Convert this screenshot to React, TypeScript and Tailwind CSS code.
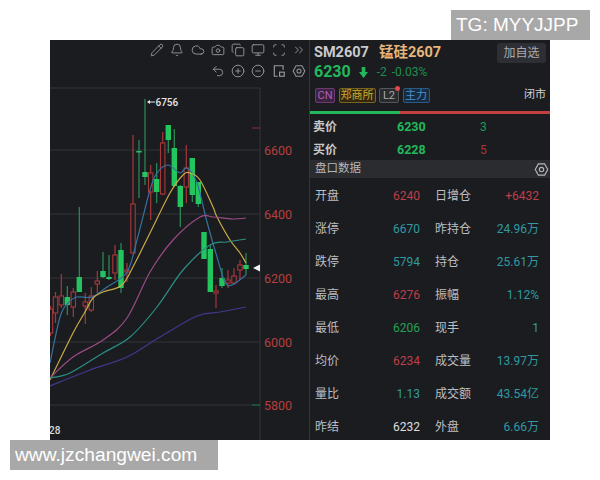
import React from "react";
import { Pencil, Bell, Cloud, Camera, Copy, Monitor, Scan, ChevronsRight, Undo2, CirclePlus, CircleMinus } from "lucide-react";

const FONT = "font-['Roboto','Noto_Sans_CJK_SC',sans-serif]";
const GREEN = "#22c55e";

// x, wickTop, wickBottom, bodyTop, bodyBottom, up(red hollow) / down(green solid)
const candles: [number, number, number, number, number, "r" | "g"][] = [
  [50.5, 306, 336, 309, 333, "r"],
  [55.5, 292, 323, 297, 313, "r"],
  [61.3, 274, 308, 296, 305, "r"],
  [67.3, 286, 315, 297, 305, "g"],
  [73.3, 288, 317, 292, 307, "r"],
  [79.3, 207, 292, 277, 292, "g"],
  [85.3, 293, 324, 302, 306, "r"],
  [91.3, 287, 312, 296, 310, "r"],
  [97.3, 271, 293, 281, 284, "r"],
  [103, 252, 278, 271, 277, "g"],
  [109, 255, 280, 277, 279, "g"],
  [115, 245, 280, 255, 273, "r"],
  [121, 243, 293, 250, 288, "g"],
  [127, 263, 282, 270, 272, "r"],
  [133, 135, 253, 204, 253, "r"],
  [139, 140, 198, 151, 152, "g"],
  [145, 99, 185, 172, 177, "g"],
  [150.7, 165, 220, 173, 192, "r"],
  [156.7, 163, 203, 179, 192, "g"],
  [162.7, 132, 195, 143, 194, "r"],
  [168.3, 125, 153, 125, 140, "g"],
  [174.3, 129, 187, 148, 186, "g"],
  [180.3, 185, 227, 186, 207, "g"],
  [186.3, 145, 203, 168, 187, "r"],
  [192.3, 158, 202, 158, 195, "g"],
  [198.3, 182, 207, 182, 204, "g"],
  [204, 232, 259, 232, 259, "g"],
  [210.3, 245, 292, 249, 292, "g"],
  [216, 285, 308, 291, 293, "r"],
  [222, 268, 288, 278, 286, "g"],
  [228, 270, 288, 280, 283, "r"],
  [234, 268, 285, 276, 283, "r"],
  [240, 260, 280, 265, 270, "r"],
  [246, 253, 275, 265, 269, "g"],
];

const lines: [string, [number, number][]][] = [
  ["#37719f", [[50, 363], [60, 317], [68, 303], [77, 297], [92, 297], [107, 287], [127, 272], [137, 240], [150, 190], [157, 173], [168, 165], [180, 173], [187, 168], [197, 183], [207, 222], [217, 257], [225, 282], [232, 285], [246, 275]]],
  ["#c9a945", [[50, 380], [73, 333], [85, 312], [93, 298], [103, 292], [122, 285], [135, 263], [150, 233], [170, 193], [183, 175], [190, 173], [200, 180], [213, 207], [217, 217], [230, 240], [240, 253], [246, 263]]],
  ["#9c4a85", [[50, 378], [73, 357], [103, 340], [127, 318], [150, 272], [173, 240], [200, 217], [213, 217], [233, 219], [246, 218]]],
  ["#2a8f84", [[50, 378], [70, 373], [103, 353], [130, 337], [157, 307], [183, 270], [210, 245], [227, 242], [246, 239]]],
  ["#3f398e", [[50, 386], [90, 370], [127, 357], [160, 337], [197, 316], [220, 312], [246, 307]]],
];

function smooth(p: [number, number][]) {
  let d = `M${p[0][0]} ${p[0][1]}`;
  for (let i = 0; i < p.length - 1; i++) {
    const a = p[Math.max(i - 1, 0)], b = p[i], c = p[i + 1], e = p[Math.min(i + 2, p.length - 1)];
    d += `C${b[0] + (c[0] - a[0]) / 6} ${b[1] + (c[1] - a[1]) / 6} ${c[0] - (e[0] - b[0]) / 6} ${c[1] - (e[1] - b[1]) / 6} ${c[0]} ${c[1]}`;
  }
  return d;
}

function Hex({ size = 14 }: { size?: number }) {
  return (
    <svg width={size} height={size} viewBox="0 0 24 24" fill="none" stroke="currentColor" strokeWidth="1.8">
      <path d="M7 3h10l5 9-5 9H7l-5-9z" />
      <circle cx="12" cy="12" r="3.5" />
    </svg>
  );
}

function PageIcon() {
  return (
    <svg width="14" height="14" viewBox="0 0 24 24" fill="none" stroke="currentColor" strokeWidth="2">
      <path d="M10 21H4V3h15v7" />
      <rect x="13" y="14" width="8" height="7" />
    </svg>
  );
}

function Chart() {
  const grid = [150, 214, 278, 342, 405];
  const labels: [string, number][] = [["6600", 150], ["6400", 214], ["6200", 278], ["6000", 342], ["5800", 405]];
  return (
    <svg width="259" height="360" viewBox="50 80 259 360" className="block overflow-visible">
      <defs>
        <clipPath id="plot">
          <rect x="50" y="80" width="210" height="360" />
        </clipPath>
      </defs>
      <line x1="50" x2="260" y1="88" y2="88" stroke="#333438" />
      <line x1="260" x2="260" y1="88" y2="440" stroke="#333438" />
      {grid.map((y) => (
        <line key={y} x1="50" x2="260" y1={y} y2={y} stroke="#333438" />
      ))}
      <line x1="252" x2="260" y1="128" y2="128" stroke="#8a3236" />
      <line x1="252" x2="260" y1="405" y2="405" stroke="#1f7a48" />
      {labels.map(([t, y]) => (
        <text key={t} x="264" y={y + 4.5} fontSize="12.5" fill="#b5403f" fontFamily="Roboto">{t}</text>
      ))}
      <g clipPath="url(#plot)">
        {candles.map(([x, wt, wb, bt, bb, c], i) => (
          <g key={i}>
            <line x1={x} x2={x} y1={wt} y2={wb} stroke={c === "r" ? "#a8383c" : "#2b9158"} strokeWidth="1.2" />
            {c === "g" ? (
              <rect x={x - 2.7} y={bt} width="5.4" height={Math.max(bb - bt, 1.5)} fill={GREEN} />
            ) : (
              <rect x={x - 2.2} y={bt} width="4.4" height={bb - bt} fill="#1b1c20" stroke="#a8383c" strokeWidth="1.1" />
            )}
          </g>
        ))}
        {lines.map(([c, p]) => (
          <path key={c} d={smooth(p)} fill="none" stroke={c} strokeWidth="1.2" />
        ))}
      </g>
      <path d="M147 102l3-2v1.500h5v1h-5V104z" fill="#e8e8e8" />
      <text x="155.500" y="106" fontSize="10" fontWeight="500" fill="#e6e6e6" fontFamily="Roboto">6756</text>
      <path d="M253 268l7-3.500v7z" fill="#f2f2f2" />
      <text x="49" y="434" fontSize="10" fontWeight="500" fill="#d8d8d8" fontFamily="Roboto">28</text>
    </svg>
  );
}

const Tag = ({ cls, children }: { cls: string; children: React.ReactNode }) => (
  <span className={`flex h-[15px] items-center justify-center rounded-[2px] border text-[11px] leading-none ${cls}`}>{children}</span>
);

const C = { r: "text-[#bd3f48]", t: "text-[#2f9aa0]", g: "text-[#23a055]", w: "text-[#dddddd]" };
const rows: [string, string, string, string, string, string][] = [
  ["开盘", "6240", C.r, "日增仓", "+6432", C.r],
  ["涨停", "6670", C.t, "昨持仓", "24.96万", C.t],
  ["跌停", "5794", C.t, "持仓", "25.61万", C.t],
  ["最高", "6276", C.r, "振幅", "1.12%", C.t],
  ["最低", "6206", C.g, "现手", "1", C.t],
  ["均价", "6234", C.r, "成交量", "13.97万", C.t],
  ["量比", "1.13", C.t, "成交额", "43.54亿", C.t],
  ["昨结", "6232", C.w, "外盘", "6.66万", C.t],
];

function Side() {
  return (
    <div className="flex h-[400px] w-[240px] flex-col overflow-hidden bg-[#1b1c20]">
      <div className="flex h-[23px] items-center pl-[4px] pr-[4px] pt-[3px]">
        <span className="text-[14.500px] font-bold text-[#c9cacc]">SM2607</span>
        <span className="ml-[10px] text-[14.500px] font-bold text-[#e6b67c]">锰硅2607</span>
        <span className="ml-auto flex h-[20px] w-[49px] items-center justify-center rounded-[3px] bg-[#2e2f34] text-[12px] text-[#a9aaad]">加自选</span>
      </div>
      <div className="flex h-[20px] items-center pb-[2px] pl-[4px]">
        <span className="text-[16px] font-bold text-[#22b85c]">6230</span>
        <svg width="9" height="11" viewBox="0 0 9 11" className="ml-[8px] text-[#22b85c]">
          <path d="M2.700 0h3.600v5H9l-4.500 6L0 5h2.700z" fill="currentColor" />
        </svg>
        <span className="ml-[9px] text-[12px] text-[#1d8f50]">-2</span>
        <span className="ml-[5px] text-[12px] text-[#1d8f50]">-0.03%</span>
      </div>
      <div className="mt-[4px] flex h-[16px] items-center gap-[3.500px] pl-[5px] pr-[4px]">
        <Tag cls="w-[20px] border-[#6f3a73] bg-[#3a2440] text-[#b05cb4]">CN</Tag>
        <Tag cls="w-[37px] border-[#7a6422] bg-[#33290f] text-[#d2a92f]">郑商所</Tag>
        <span className="relative">
          <Tag cls="w-[20px] border-[#55565a] bg-[#2a2b2f] text-[#a8a9ac]">L2</Tag>
          <span className="absolute right-[-1px] top-[-2px] h-[5px] w-[5px] rounded-full bg-[#e2454b]" />
        </span>
        <Tag cls="w-[27px] border-[#2c5a86] bg-[#182c40] text-[#4a90d0]">主力</Tag>
        <span className="ml-auto text-[11px] text-[#d2d2d2]">闭市</span>
      </div>
      <div className="mt-[8px] flex h-[3px]">
        <div className="w-[90px] bg-[#22b85c]" />
        <div className="flex-1 bg-[#c2403f]" />
      </div>
      <div className="flex h-[23px] items-center pl-[3px] pt-[3px] text-[12px] font-bold">
        <span className="w-[84px] text-[#c8c8c8]">卖价</span>
        <span className="w-[83px] text-[12.500px] text-[#22b85c]">6230</span>
        <span className="font-normal text-[#1f9a54]">3</span>
      </div>
      <div className="flex h-[23px] items-center pl-[3px] pt-[3px] text-[12px] font-bold">
        <span className="w-[84px] text-[#c8c8c8]">买价</span>
        <span className="w-[83px] text-[12.500px] text-[#22b85c]">6228</span>
        <span className="font-normal text-[#a8383c]">5</span>
      </div>
      <div className="flex h-[18px] items-center justify-between bg-[#2b2c30] pl-[5px] pr-[1.500px] text-[#b6b7b9]">
        <span className="text-[11.500px]">盘口数据</span>
        <Hex size={15} />
      </div>
      <div className="flex min-h-0 flex-1 flex-col pt-[1.500px]">
        {rows.map(([a, b, bc, c, d, dc]) => (
          <div key={a} className="flex h-[33px] shrink-0 items-center pl-[5px] text-[12px]">
            <div className="flex w-[105px] justify-between">
              <span className="text-[#bdbec0]">{a}</span>
              <span className={bc}>{b}</span>
            </div>
            <div className="ml-[15px] flex w-[104px] justify-between">
              <span className="text-[#bdbec0]">{c}</span>
              <span className={dc}>{d}</span>
            </div>
          </div>
        ))}
      </div>
    </div>
  );
}

export default function App() {
  const s = { size: 14, strokeWidth: 1.6 };
  return (
    <div className={`h-[480px] w-[600px] overflow-hidden bg-white pt-[10px] ${FONT}`}>
      <div className="flex h-[30px] justify-end pr-[10px]">
        <div className="flex w-[139px] items-center bg-[#a8a8a8] pl-[5px] font-['Liberation_Sans',sans-serif] text-[19px] text-white">TG: MYYJJPP</div>
      </div>
      <div className="ml-[50px] flex h-[400px] w-[500px] bg-[#1b1c20]">
        <div className="w-[259px] shrink-0">
          <div className="flex h-[40px] flex-col items-end gap-[7px] pr-[3px] pt-[3px] text-[#96979a]">
            <div className="flex gap-[6.300px]">
              <Pencil {...s} /><Bell {...s} /><Cloud {...s} /><Camera {...s} /><Copy {...s} /><Monitor {...s} /><Scan {...s} /><ChevronsRight {...s} />
            </div>
            <div className="flex gap-[6.300px]">
              <Undo2 {...s} /><CirclePlus {...s} /><CircleMinus {...s} /><PageIcon /><Hex />
            </div>
          </div>
          <Chart />
        </div>
        <div className="w-px bg-[#35363a]" />
        <Side />
      </div>
      <div className="ml-[10px] flex h-[30px] w-[208px] items-center bg-[#a8a8a8] pl-[5px] font-['Liberation_Sans',sans-serif] text-[19.200px] text-white">www.jzchangwei.com</div>
    </div>
  );
}
